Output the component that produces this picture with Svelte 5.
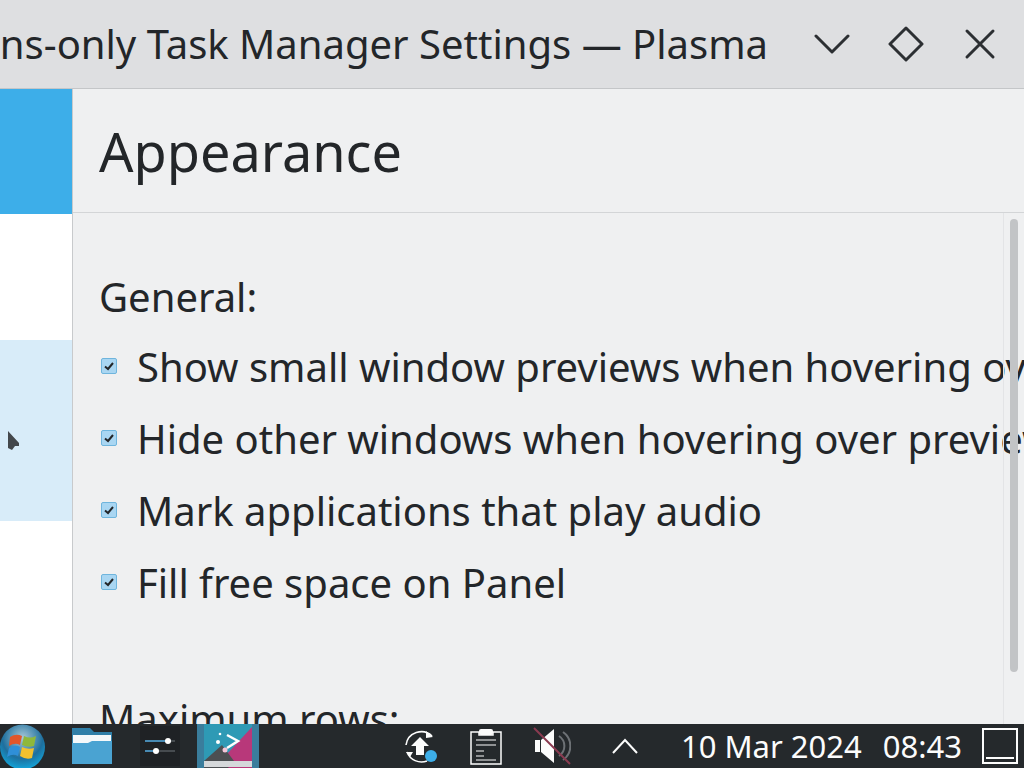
<script lang="ts">
	const general = [
		'Show small window previews when hovering over Tasks',
		'Hide other windows when hovering over previews',
		'Mark applications that play audio',
		'Fill free space on Panel'
	];
</script>

<div class="screen">
	<header class="titlebar">
		<div class="title"><span>Icons-only Task Manager Settings — Plasma</span></div>
		<div class="buttons">
			<svg width="36" height="36" viewBox="0 0 36 36"><path d="M2 10 L18 26 L34 10" /></svg>
			<svg width="36" height="36" viewBox="0 0 36 36"><path d="M18 2 L34 18 L18 34 L2 18 Z" /></svg>
			<svg width="36" height="36" viewBox="0 0 36 36"><path d="M5 5 L31 31 M31 5 L5 31" /></svg>
		</div>
	</header>

	<div class="body">
		<aside class="sidebar">
			<div class="item-active"></div>
			<div class="item-hover">
				<svg class="cursor" width="12" height="20" viewBox="0 0 12 20"><path d="M0 0 L11 12 L11 15 L7 15 L4 19 L0 17 Z" /></svg>
			</div>
		</aside>

		<main class="content">
			<div class="page-header"><h1>Appearance</h1></div>
			<div class="scroller">
				<div class="form">
					<p class="label">General:</p>
					<ul>
						{#each general as text}
							<li>
								<span class="check">
									<svg width="12" height="12" viewBox="0 0 12 12"><path d="M2 6.5 L5 9 L10 3" /></svg>
								</span>
								<span>{text}</span>
							</li>
						{/each}
					</ul>
					<p class="label rows">Maximum rows:</p>
				</div>
				<div class="scrollbar"><div class="thumb"></div></div>
			</div>
		</main>
	</div>

	<footer class="panel">
		<div class="launchers">
			<svg class="start" width="46" height="46" viewBox="0 0 46 46">
				<defs>
					<radialGradient id="orb" cx="50%" cy="30%" r="75%">
						<stop offset="0" stop-color="#a8c8d6" />
						<stop offset="0.6" stop-color="#1d6f9e" />
						<stop offset="1" stop-color="#12b0e6" />
					</radialGradient>
				</defs>
				<circle cx="22.5" cy="24" r="22.5" fill="url(#orb)" />
				<path d="M10 14 Q16 10 22 13 L20 22 Q15 19 9 23 Z" fill="#e2562a" />
				<path d="M24 13 Q30 16 36 13 L34 23 Q28 25 22 22 Z" fill="#8fb83a" />
				<path d="M9 25 Q15 21 20 24 L18 33 Q13 30 7 34 Z" fill="#2f8fd8" />
				<path d="M22 24 Q28 27 34 25 L32 35 Q26 37 20 33 Z" fill="#f2c12e" />
			</svg>
			<svg class="folder" width="40" height="36" viewBox="0 0 40 36">
				<path d="M0 0 H18 L22 4 H40 V36 H0 Z" fill="#2f7fa8" />
				<rect x="1" y="7" width="38" height="9" fill="#f4f8fa" />
				<path d="M0 15 H16 L20 13 H40 V36 H0 Z" fill="#4aa3d2" />
			</svg>
			<div class="settings-tile">
				<svg width="40" height="40" viewBox="0 0 40 40">
					<path d="M5 15 H35" stroke="#555a5e" stroke-width="1.5" />
					<path d="M5 15 H28" stroke="#4a9fd4" stroke-width="1.5" />
					<circle cx="28" cy="15" r="3" fill="#fff" />
					<path d="M5 25 H35" stroke="#555a5e" stroke-width="1.5" />
					<path d="M5 25 H16" stroke="#4a9fd4" stroke-width="1.5" />
					<circle cx="16" cy="25" r="3" fill="#fff" />
				</svg>
			</div>
			<div class="active-tile">
				<svg width="48" height="44" viewBox="0 0 48 44">
					<rect width="48" height="44" fill="#2e9ab5" />
					<path d="M48 3 V44 H10 Z" fill="#b8387a" />
					<path d="M0 37 L18 21 L30 37 L24 44 H0 Z" fill="#4c4f52" />
					<path d="M23 11 L34 17 L23 24" fill="none" stroke="#fff" stroke-width="2.5" />
					<circle cx="16" cy="10" r="1.3" fill="#fff" />
					<circle cx="14" cy="18" r="2" fill="#fff" />
					<circle cx="21" cy="26" r="2.5" fill="#f5c6d8" />
					<rect x="0" y="37" width="48" height="6" fill="#d5d8da" />
				</svg>
			</div>
		</div>
		<div class="tray">
			<svg class="update" width="36" height="36" viewBox="0 0 36 36">
				<path d="M29 8 A15.5 15.5 0 0 0 3 17 M4 24 A15.5 15.5 0 0 0 24 33" fill="none" stroke="#fcfcfc" stroke-width="1.6" />
				<path d="M23 3 L30 9 L23 10 Z M7 29 L10 24 L3 24 Z" fill="#fcfcfc" />
				<path d="M17 9 L26 18 H21 V27 H13 V18 H8 Z" fill="#fcfcfc" />
				<circle cx="28" cy="28" r="6" fill="#3daee9" />
			</svg>
			<svg class="clipboard" width="32" height="38" viewBox="0 0 32 38">
				<path d="M1 5 H9 V8 H23 V5 H31 V37 H1 Z" fill="none" stroke="#fcfcfc" stroke-width="1.5" />
				<rect x="9" y="2" width="14" height="6" rx="2" fill="#fcfcfc" />
				<path d="M6 13 H26 M6 18 H26 M6 24 H14 M6 29 H14 M6 33 H26" stroke="#fcfcfc" stroke-width="1.2" />
			</svg>
			<svg class="speaker" width="38" height="38" viewBox="0 0 38 38">
				<path d="M2 13 H7 V25 H2 Z M8 13 L21 2 V36 L8 25 Z" fill="#fcfcfc" />
				<path d="M26 9 A12 12 0 0 1 26 29 M30 5 A17 17 0 0 1 30 33" fill="none" stroke="#6d7175" stroke-width="2" />
				<path d="M1 1 L37 37" stroke="#8a3a50" stroke-width="2" />
			</svg>
			<svg class="chevron" width="28" height="18" viewBox="0 0 28 18"><path d="M2 16 L14 3 L26 16" /></svg>
			<span class="clock date">10 Mar 2024</span>
			<span class="clock">08:43</span>
			<div class="show-desktop"><span></span></div>
		</div>
	</footer>
</div>

<style>
	:global(body) {
		font-family: 'Noto Sans', sans-serif;
	}
	.screen {
		width: 1024px;
		height: 768px;
		overflow: hidden;
		display: flex;
		flex-direction: column;
		background: #eff0f1;
		color: #232629;
	}
	.titlebar {
		height: 88px;
		flex: none;
		display: flex;
		align-items: center;
		background: #dedfe1;
		border-bottom: 1px solid #c4c6c8;
	}
	.title {
		width: 768px;
		flex: none;
		overflow: hidden;
		display: flex;
		justify-content: flex-end;
		white-space: nowrap;
		font-size: 40px;
		padding-bottom: 1px;
	}
	.buttons {
		display: flex;
		gap: 38px;
		margin-left: 46px;
	}
	.buttons svg {
		fill: none;
		stroke: #2c2f32;
		stroke-width: 3;
		stroke-linecap: round;
		stroke-linejoin: round;
	}
	.body {
		flex: 1;
		min-height: 0;
		display: flex;
	}
	.sidebar {
		width: 72px;
		flex: none;
		background: #fff;
		border-right: 1px solid #c8cacc;
	}
	.item-active {
		height: 125px;
		background: #3daee9;
	}
	.item-hover {
		position: relative;
		height: 181px;
		margin-top: 126px;
		background: #d8ecf9;
	}
	.cursor {
		position: absolute;
		left: 8px;
		top: 91px;
		fill: #44484c;
	}
	.content {
		flex: 1;
		min-width: 0;
		display: flex;
		flex-direction: column;
	}
	.page-header {
		height: 123px;
		flex: none;
		display: flex;
		align-items: center;
		padding-left: 26px;
		border-bottom: 1px solid #d3d5d7;
	}
	h1 {
		margin: 0;
		font-size: 54px;
		font-weight: 400;
	}
	.scroller {
		position: relative;
		flex: 1;
		min-height: 0;
		overflow: hidden;
	}
	.form {
		padding: 57px 0 0 26px;
		font-size: 40px;
		white-space: nowrap;
	}
	.label {
		margin: 0;
		line-height: 54px;
	}
	.rows {
		margin-top: 85px;
	}
	ul {
		list-style: none;
		margin: 17px 0 0;
		padding: 0;
		display: flex;
		flex-direction: column;
		gap: 22px;
	}
	li {
		display: flex;
		align-items: center;
		gap: 20px;
		height: 50px;
	}
	.check {
		width: 16px;
		height: 16px;
		margin-left: 2px;
		box-sizing: border-box;
		flex: none;
		display: flex;
		align-items: center;
		justify-content: center;
		background: #a9d6f2;
		border: 1px solid #6fb5dd;
		border-radius: 2px;
	}
	.check svg {
		fill: none;
		stroke: #232629;
		stroke-width: 2;
	}
	.scrollbar {
		position: absolute;
		top: 0;
		right: 0;
		bottom: 0;
		width: 21px;
		box-sizing: border-box;
		padding: 6px 0 0 6px;
		border-left: 1px solid #e3e4e6;
	}
	.thumb {
		width: 8px;
		height: 453px;
		background: #c2c4c6;
		border-radius: 4px;
	}
	.panel {
		height: 44px;
		flex: none;
		display: flex;
		align-items: center;
		justify-content: space-between;
		background: #25292c;
		color: #fcfcfc;
	}
	.launchers {
		display: flex;
		align-items: center;
		height: 100%;
	}
	.start {
		flex: none;
	}
	.folder {
		margin-left: 26px;
		flex: none;
	}
	.settings-tile {
		width: 40px;
		height: 40px;
		margin-left: 28px;
		display: flex;
		align-items: center;
		justify-content: center;
		background: #1f2225;
	}
	.active-tile {
		width: 62px;
		height: 100%;
		margin-left: 17px;
		display: flex;
		align-items: flex-end;
		justify-content: center;
		background: #3a7d9c;
	}
	.tray {
		display: flex;
		align-items: center;
		height: 100%;
	}
	.tray > svg {
		flex: none;
	}
	.clipboard {
		margin-left: 31px;
	}
	.speaker {
		margin-left: 31px;
	}
	.chevron {
		margin-left: 40px;
		fill: none;
		stroke: #fcfcfc;
		stroke-width: 2;
	}
	.clock {
		font-size: 31px;
		white-space: nowrap;
	}
	.date {
		margin-left: 42px;
		margin-right: 21px;
	}
	.show-desktop {
		width: 36px;
		height: 36px;
		margin: 0 6px 0 20px;
		box-sizing: border-box;
		border: 2px solid #fcfcfc;
		display: flex;
		align-items: flex-end;
		padding: 0 2px 3px;
	}
	.show-desktop span {
		display: block;
		width: 100%;
		height: 2px;
		background: #fcfcfc;
	}
</style>
